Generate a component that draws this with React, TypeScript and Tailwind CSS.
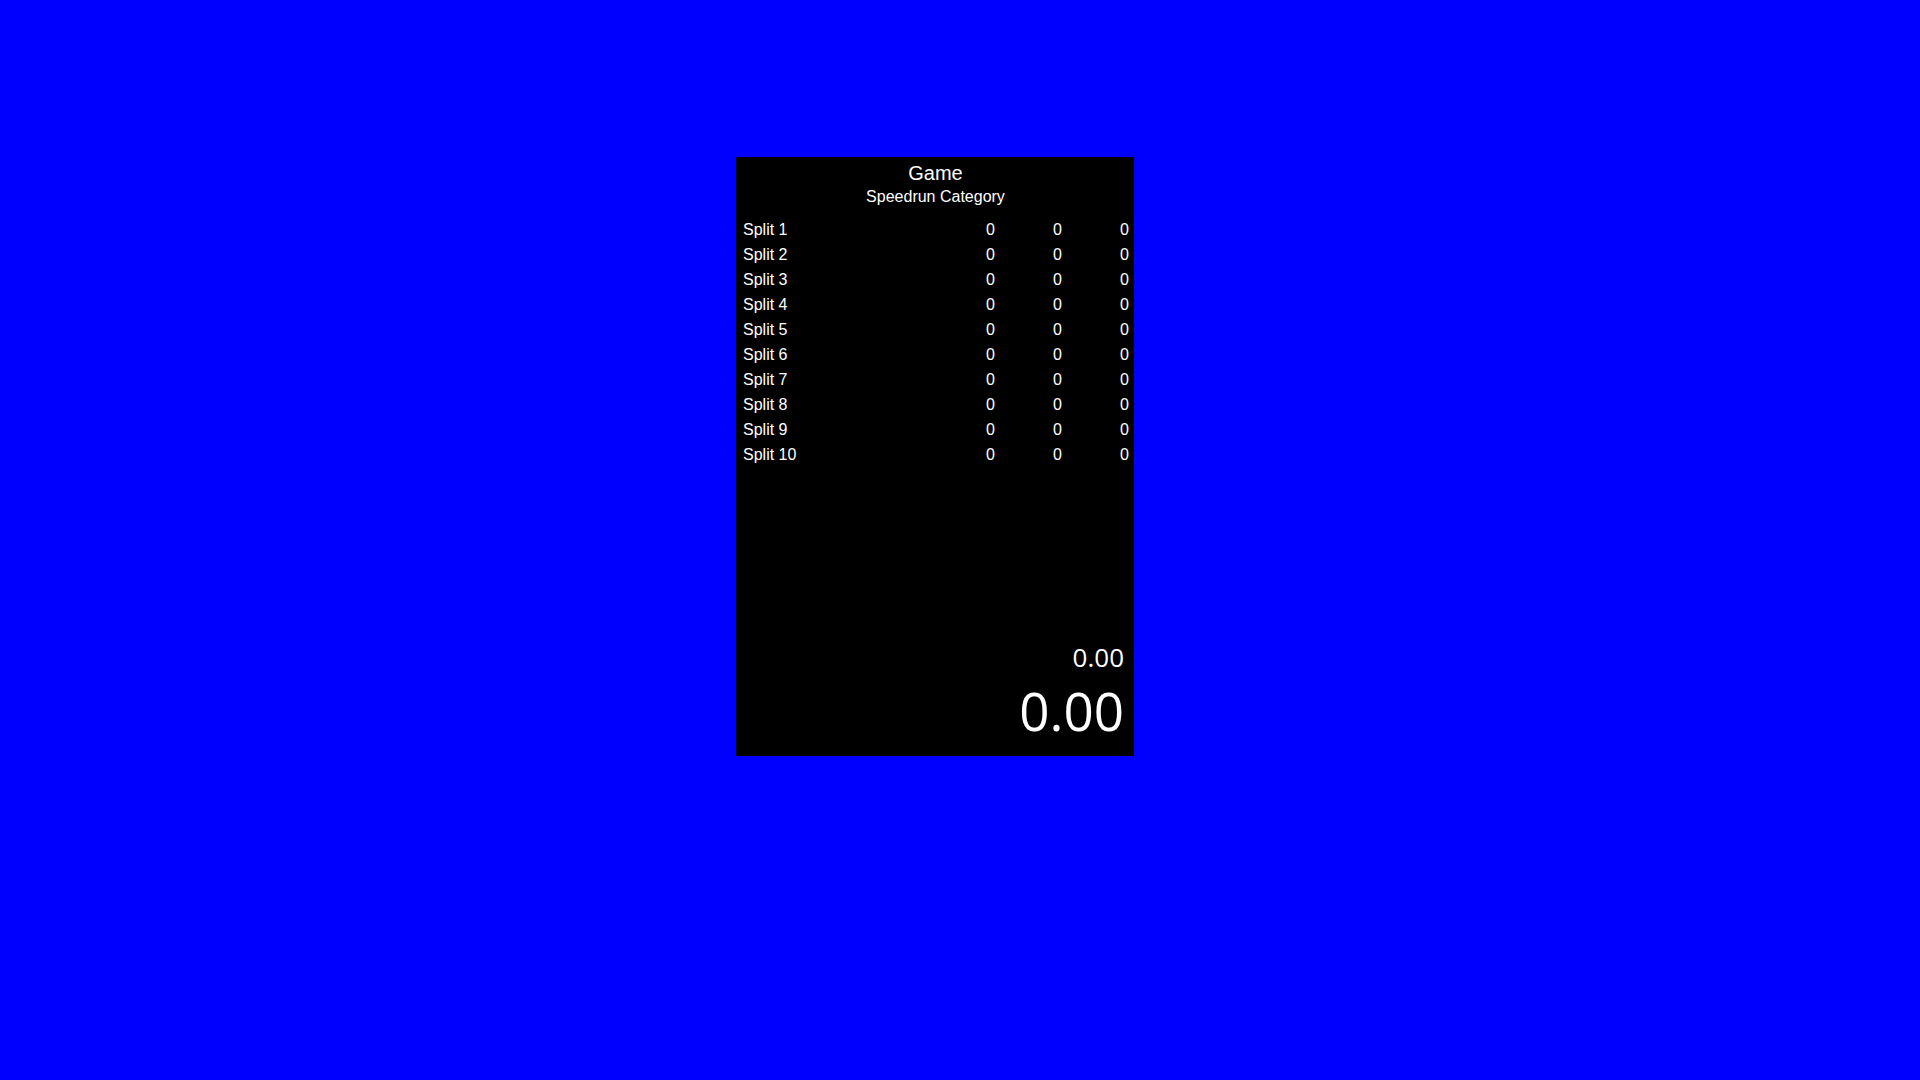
import React from "react";

const splits = Array.from({ length: 10 }, (_, i) => `Split ${i + 1}`);

export default function App() {
  return (
    <div className="w-[1920px] h-[1080px] bg-[#0000ff] overflow-hidden pt-[157px] pl-[736px]">
      <div className="w-[398px] h-[599px] bg-black text-white flex flex-col font-['Liberation_Sans',Arial,sans-serif]">
        <div className="pt-[4px] text-center pl-[1px]">
          <div className="text-[20px] leading-[25px]">Game</div>
          <div className="text-[16px] leading-[21px]">Speedrun Category</div>
        </div>
        <div className="mt-[10px] pl-[7px] pr-[5px] flex flex-col">
          {splits.map((s) => (
            <div key={s} className="flex h-[25px] items-center text-[16px] leading-[25px]">
              <div className="flex-1">{s}</div>
              <div className="w-[67px] text-right">0</div>
              <div className="w-[67px] text-right">0</div>
              <div className="w-[67px] text-right">0</div>
            </div>
          ))}
        </div>
        <div className="flex-1" />
        <div className="pr-[10px] text-right font-['Open_Sans',sans-serif] pb-[15px]">
          <div className="text-[26px] leading-[30px] mb-[9px]">0.00</div>
          <div className="text-[53px] leading-[60px]">0.00</div>
        </div>
      </div>
    </div>
  );
}
